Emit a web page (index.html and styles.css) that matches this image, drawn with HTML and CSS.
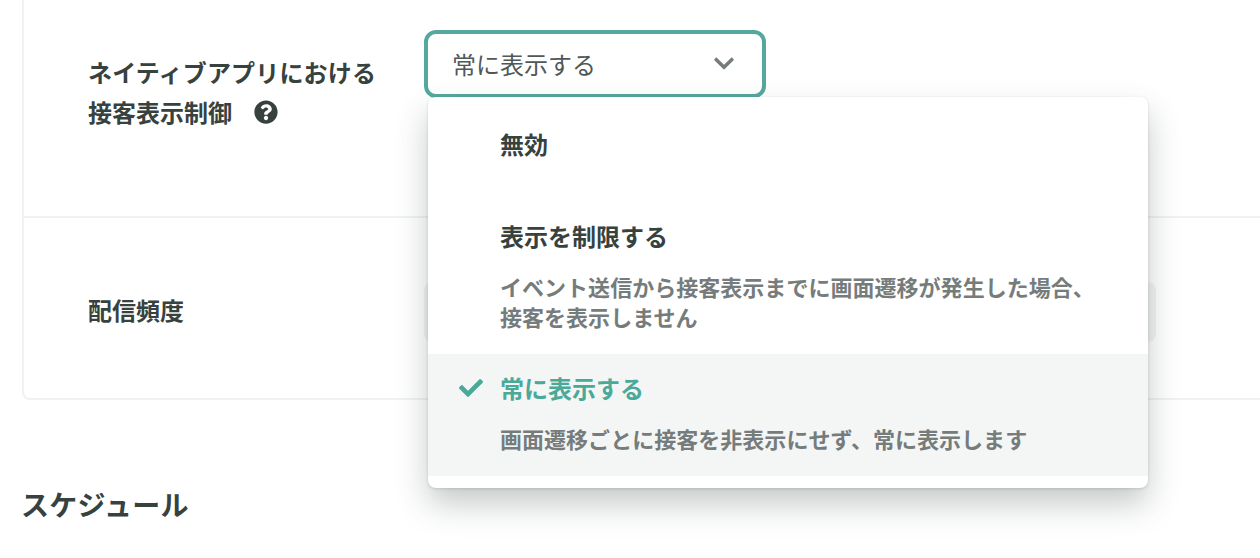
FILE: index.html
```html
<!DOCTYPE html>
<html lang="ja">
<head>
<meta charset="utf-8">
<title>配信設定</title>
<link rel="stylesheet" href="styles.css">
</head>
<body>
<main class="page">
  <section class="card">
    <div class="row row-top">
      <div class="label">
        <div class="label-line">ネイティブアプリにおける</div>
        <div class="label-help">接客表示制御
          <svg class="help" viewBox="0 0 512 512" aria-hidden="true"><path d="M504 256c0 136.997-111.043 248-248 248S8 392.997 8 256C8 119.083 119.043 8 256 8s248 111.083 248 248zM262.655 90c-54.497 0-89.255 22.957-116.549 63.758-3.536 5.286-2.353 12.415 2.715 16.258l34.699 26.31c5.205 3.947 12.621 3.008 16.665-2.122 17.864-22.658 30.113-35.797 57.303-35.797 20.429 0 45.698 13.148 45.698 32.958 0 14.976-12.363 22.667-32.534 33.976C247.128 238.528 216 254.941 216 296v4c0 6.627 5.373 12 12 12h56c6.627 0 12-5.373 12-12v-1.333c0-28.462 83.186-29.647 83.186-106.667 0-58.002-60.165-102-116.531-102zM256 338c-25.365 0-46 20.635-46 46 0 25.364 20.635 46 46 46s46-20.636 46-46c0-25.365-20.635-46-46-46z"/></svg>
        </div>
      </div>
      <div class="select-wrap">
        <div class="select">
          <span>常に表示する</span>
          <svg class="chevron" viewBox="0 0 448 512" aria-hidden="true"><path d="M207.029 381.476L12.686 187.132c-9.373-9.373-9.373-24.569 0-33.941l22.667-22.667c9.357-9.357 24.522-9.375 33.901-.04L224 284.505l154.745-154.021c9.379-9.335 24.544-9.317 33.901.04l22.667 22.667c9.373 9.373 9.373 24.569 0 33.941L240.971 381.476c-9.373 9.372-24.569 9.372-33.942 0z"/></svg>
        </div>
        <div class="menu">
          <div class="option option-solo">
            <div class="option-title">無効</div>
          </div>
          <div class="option">
            <div class="option-title">表示を制限する</div>
            <div class="option-desc">イベント送信から接客表示までに画面遷移が発生した場合、<br>接客を表示しません</div>
          </div>
          <div class="option option-selected">
            <svg class="check" viewBox="0 0 512 512" aria-hidden="true"><path d="M173.898 439.404l-166.4-166.4c-9.997-9.997-9.997-26.206 0-36.204l36.203-36.204c9.997-9.998 26.207-9.998 36.204 0L192 312.69 432.095 72.596c9.997-9.997 26.207-9.997 36.204 0l36.203 36.204c9.997 9.997 9.997 26.206 0 36.204l-294.4 294.401c-9.998 9.997-26.207 9.997-36.204-.001z"/></svg>
            <div class="option-title">常に表示する</div>
            <div class="option-desc">画面遷移ごとに接客を非表示にせず、常に表示します</div>
          </div>
        </div>
      </div>
    </div>
    <div class="row row-bottom">
      <div class="label">配信頻度</div>
      <div class="select-disabled"></div>
    </div>
  </section>
  <h2 class="heading">スケジュール</h2>
</main>
</body>
</html>
```
FILE: styles.css
```css
html, body {
  margin: 0;
  height: 558px;
  overflow: hidden;
  background: #fff;
}
body {
  font-family: "Noto Sans CJK JP", "Noto Sans", sans-serif;
  color: #37423f;
}
.page {
  padding-left: 22px;
}
.card {
  box-sizing: border-box;
  border-left: 2px solid #f0f1f1;
  border-bottom: 2px solid #f0f1f1;
  border-bottom-left-radius: 8px;
}
.row {
  display: flex;
  box-sizing: border-box;
  padding-left: 64px;
}
.row-top {
  height: 218px;
  padding-top: 30px;
  border-bottom: 2px solid #f0f1f1;
}
.row-bottom {
  height: 180px;
  padding-top: 64px;
}
.label {
  width: 336px;
  flex: none;
  font-size: 24px;
  font-weight: 700;
  line-height: 40px;
}
.row-top .label {
  padding-top: 22px;
}
.row-bottom .label {
  line-height: 56px;
}
.label-line {
  letter-spacing: 0.17px;
}
.label-help {
  display: flex;
  align-items: center;
  gap: 22px;
}
.help {
  width: 24px;
  height: 24px;
  fill: #37423f;
}
.select-wrap {
  position: relative;
  width: 342px;
  height: 68px;
}
.select {
  box-sizing: border-box;
  height: 68px;
  display: flex;
  align-items: center;
  justify-content: space-between;
  padding: 0 28px 1px 24px;
  border: 4px solid #55a89d;
  border-radius: 12px;
  background: #fff;
  font-size: 24px;
  color: #4f5857;
}
.chevron {
  width: 20px;
  height: 23px;
  fill: #757c7b;
}
.select-disabled {
  width: 732px;
  height: 60px;
  border-radius: 8px;
  background: #f3f4f4;
}
.menu {
  position: absolute;
  top: 67px;
  left: 4px;
  width: 720px;
  height: 391px;
  box-sizing: border-box;
  padding-top: 14px;
  background: #fff;
  border-radius: 8px;
  box-shadow: 0 16px 32px rgba(54, 65, 64, 0.28), 0 1px 3px rgba(54, 65, 64, 0.18);
  z-index: 2;
}
.option {
  position: relative;
  padding: 15px 32px 23px 72px;
}
.option-solo {
  padding: 14px 32px 39px 72px;
}
.option-title {
  font-size: 24px;
  font-weight: 700;
  line-height: 38px;
  color: #37423f;
}
.option-desc {
  margin-top: 16px;
  font-size: 22px;
  font-weight: 700;
  line-height: 30px;
  letter-spacing: 0.03px;
  color: #757c7b;
}
.option-selected {
  background: #f4f6f5;
}
.option-selected .option-title {
  color: #4ba999;
}
.check {
  position: absolute;
  top: 22px;
  left: 31px;
  width: 24px;
  height: 24px;
  fill: #4ba999;
}
.heading {
  margin: 81px 0 0 -1px;
  font-size: 28px;
  font-weight: 700;
  line-height: 46px;
  letter-spacing: 0.3px;
  color: #37423f;
}
```
